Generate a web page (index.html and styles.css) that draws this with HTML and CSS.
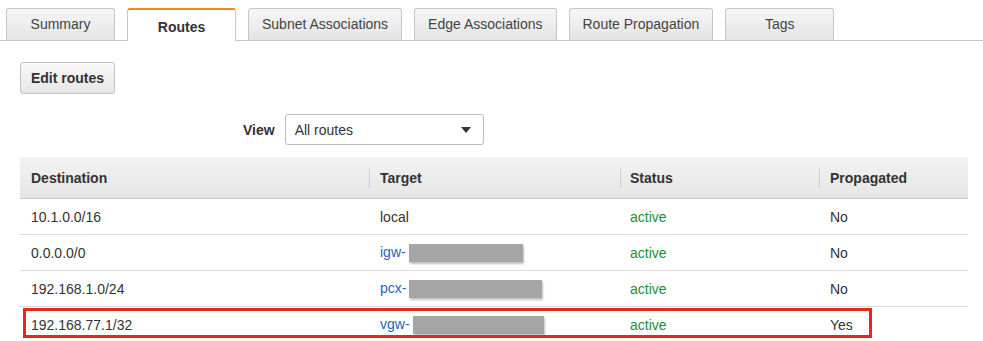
FILE: index.html
```html
<!DOCTYPE html>
<html lang="en">
<head>
    <meta charset="UTF-8">
    <meta name="viewport" content="width=device-width, initial-scale=1.0">
    <title>Route Table</title>
    <link rel="stylesheet" href="styles.css">
</head>
<body>
    <div class="tabs">
        <div class="tab">Summary</div>
        <div class="tab active">Routes</div>
        <div class="tab">Subnet Associations</div>
        <div class="tab">Edge Associations</div>
        <div class="tab">Route Propagation</div>
        <div class="tab">Tags</div>
    </div>

    <div class="panel">
        <button class="btn">Edit routes</button>

        <div class="filter">
            <span class="filter-label">View</span>
            <div class="select">
                <span>All routes</span>
                <span class="caret"></span>
            </div>
        </div>

        <div class="table-wrap">
            <table class="routes">
                <thead>
                    <tr>
                        <th class="col-dest">Destination</th>
                        <th class="col-target"><span class="sep"></span>Target</th>
                        <th class="col-status"><span class="sep"></span>Status</th>
                        <th class="col-prop"><span class="sep"></span>Propagated</th>
                    </tr>
                </thead>
                <tbody>
                    <tr>
                        <td>10.1.0.0/16</td>
                        <td>local</td>
                        <td class="active">active</td>
                        <td>No</td>
                    </tr>
                    <tr>
                        <td>0.0.0.0/0</td>
                        <td><a class="link">igw-</a><span class="redact" style="width:114px"></span></td>
                        <td class="active">active</td>
                        <td>No</td>
                    </tr>
                    <tr>
                        <td>192.168.1.0/24</td>
                        <td><a class="link">pcx-</a><span class="redact" style="width:133px"></span></td>
                        <td class="active">active</td>
                        <td>No</td>
                    </tr>
                    <tr>
                        <td>192.168.77.1/32</td>
                        <td><a class="link">vgw-</a><span class="redact" style="width:131px"></span></td>
                        <td class="active">active</td>
                        <td>Yes</td>
                    </tr>
                </tbody>
            </table>
            <div class="highlight"></div>
        </div>
    </div>
</body>
</html>
```

FILE: styles.css
```css
body {
    margin: 0;
    padding: 0;
    font-family: 'Liberation Sans', Arial, sans-serif;
    font-size: 14px;
    color: #333;
    background: #fff;
}

.tabs {
    display: flex;
    gap: 12px;
    padding: 8px 0 0 6px;
    border-bottom: 1px solid #c6c6c6;
    height: 32px;
}

.tab {
    min-width: 109px;
    padding: 0 13px;
    height: 32px;
    box-sizing: border-box;
    display: flex;
    align-items: center;
    justify-content: center;
    padding-bottom: 1px;
    background: linear-gradient(#f6f6f6, #e4e4e4);
    border: 1px solid #c6c6c6;
    border-bottom: none;
    border-radius: 3px 3px 0 0;
    color: #444;
}

.tab.active {
    background: #fff;
    border-top: 2px solid #f0891d;
    font-weight: bold;
    color: #333;
    height: 33px;
    padding-top: 3px;
    margin-bottom: -1px;
}

.panel {
    padding: 21px 15px 0 20px;
}

.btn {
    display: block;
    height: 32px;
    width: 95px;
    padding: 0;
    font-family: inherit;
    font-size: 14px;
    font-weight: bold;
    color: #333;
    background: linear-gradient(#f9f9f9, #e6e6e6);
    border: 1px solid #c3c3c3;
    border-radius: 3px;
}

.filter {
    display: flex;
    align-items: center;
    gap: 10px;
    margin: 20px 0 12px 223px;
}

.filter-label {
    font-weight: bold;
}

.select {
    width: 199px;
    height: 31px;
    box-sizing: border-box;
    border: 1px solid #bcbcbc;
    border-radius: 3px;
    display: flex;
    align-items: center;
    justify-content: space-between;
    padding: 0 12px 0 9px;
}

.caret {
    width: 0;
    height: 0;
    border-left: 5px solid transparent;
    border-right: 5px solid transparent;
    border-top: 6px solid #333;
}

.table-wrap {
    position: relative;
    width: 948px;
}

.routes {
    width: 100%;
    border-collapse: collapse;
}

.routes th {
    position: relative;
    height: 41px;
    padding: 0 0 0 11px;
    text-align: left;
    font-weight: bold;
    color: #333;
    background: linear-gradient(#f2f2f2, #e6e6e6);
    border-bottom: 1px solid #c9c9c9;
}

.sep {
    position: absolute;
    left: 0;
    top: 11px;
    height: 20px;
    border-left: 1px solid #cfcfcf;
}

.col-dest { width: 338px; }
.col-target { width: 240px; }
.col-status { width: 189px; }

.routes td {
    height: 35px;
    padding: 0 0 0 11px;
    border-bottom: 1px solid #dcdcdc;
    white-space: nowrap;
}

.routes tbody tr:last-child td {
    border-bottom: none;
}

.routes td:nth-child(3),
.routes th:nth-child(3) {
    padding-left: 10px;
}

.active {
    color: #1d8f2e;
}

.link {
    color: #1f65b8;
}

.redact {
    display: inline-block;
    height: 18px;
    margin-left: 3px;
    vertical-align: -5px;
    background: #a5a5a5;
    box-shadow: 1px 2px 2px rgba(0, 0, 0, 0.25);
}

.highlight {
    position: absolute;
    left: 3px;
    bottom: 4px;
    width: 843px;
    height: 24px;
    border: 3px solid #e8261c;
}
```
